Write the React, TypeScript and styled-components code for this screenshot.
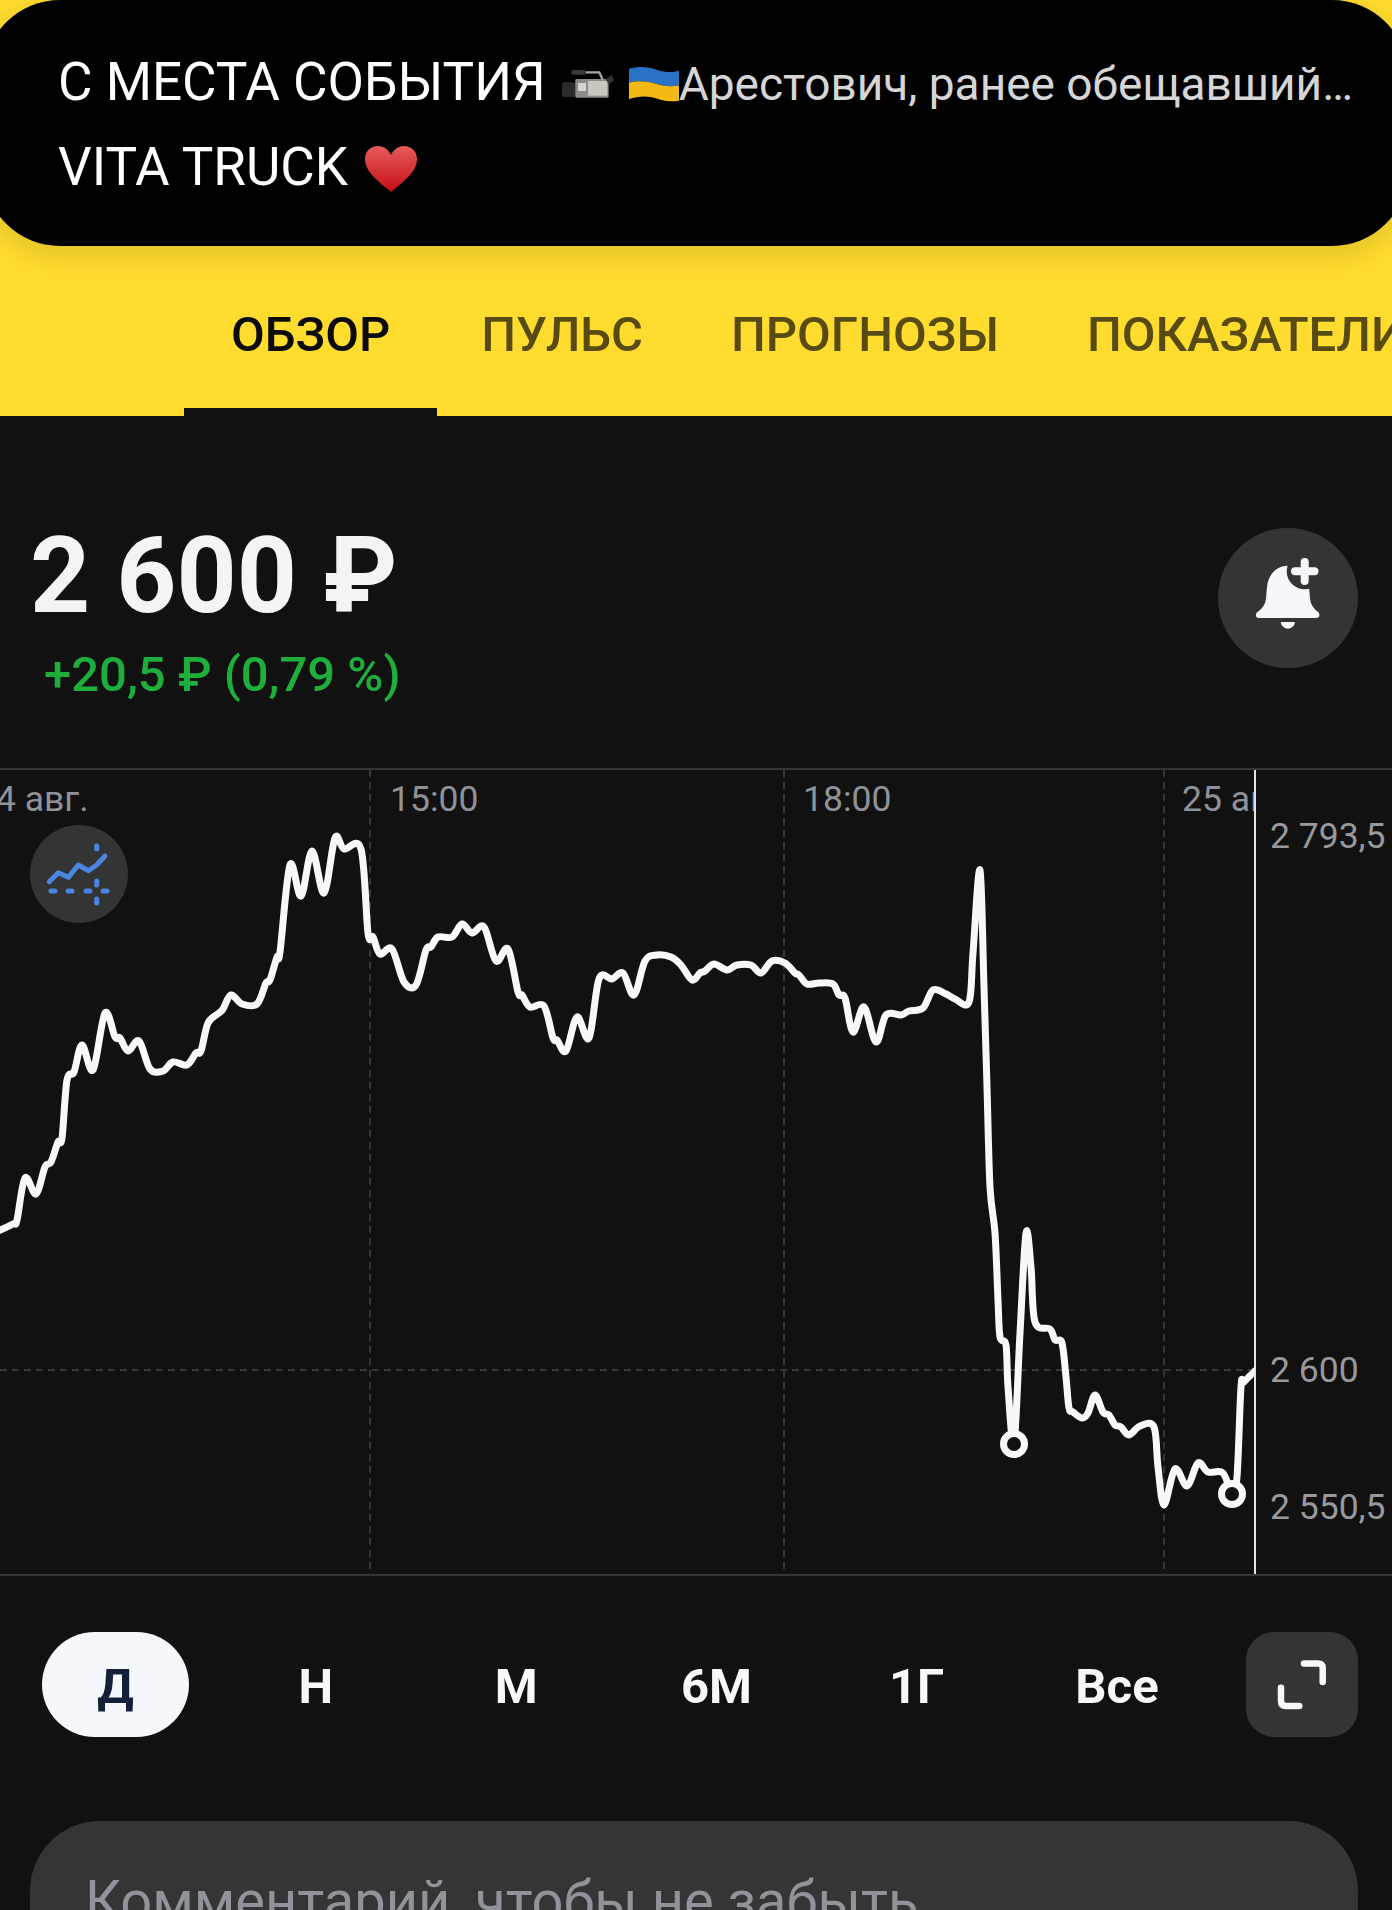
import styled, { createGlobalStyle } from "styled-components";

const GlobalStyle = createGlobalStyle`
  html, body {
    margin: 0;
    background: #111112;
    font-family: Roboto, "Liberation Sans", sans-serif;
  }
`;

const PRICE_LINE: [number, number][] = [
  [-4, 1232], [13, 1224], [17, 1220], [25, 1178], [36, 1194], [45, 1167], [51, 1162], [58, 1142],
  [62, 1138], [67, 1080], [74, 1072], [82, 1045], [93, 1070], [105, 1013], [115, 1037], [120, 1038],
  [128, 1051], [139, 1041], [150, 1069], [163, 1071], [173, 1062], [187, 1065], [196, 1053], [201, 1051],
  [208, 1023], [219, 1013], [223, 1009], [231, 995], [242, 1004], [257, 1004], [266, 983], [270, 980],
  [277, 957], [280, 952], [290, 865], [301, 896], [312, 851], [324, 893], [335, 838], [344, 849],
  [361, 849], [368, 933], [373, 937], [380, 954], [392, 949], [404, 982], [416, 985], [426, 950],
  [431, 947], [438, 937], [452, 937], [462, 924], [472, 933], [484, 927], [496, 961], [508, 949],
  [518, 992], [522, 995], [530, 1007], [544, 1006], [553, 1038], [557, 1040], [566, 1051], [577, 1017],
  [589, 1038], [599, 979], [612, 979], [623, 973], [634, 995], [645, 961], [657, 955], [671, 957],
  [681, 965], [692, 980], [700, 973], [705, 971], [714, 964], [727, 970], [737, 965], [751, 965],
  [761, 973], [772, 961], [785, 963], [795, 973], [799, 975], [807, 984], [819, 983], [833, 984],
  [839, 995], [845, 998], [853, 1032], [864, 1007], [876, 1042], [886, 1015], [901, 1015], [909, 1011],
  [923, 1008], [933, 990], [946, 994], [955, 999], [969, 1002], [973, 953], [980, 870], [984, 987],
  [987, 1087], [990, 1187], [995, 1233], [998, 1300], [1000, 1337], [1006, 1345], [1008, 1387], [1014, 1444],
  [1020, 1333], [1026, 1233], [1031, 1267], [1035, 1322], [1050, 1329], [1055, 1340], [1062, 1343], [1066, 1377],
  [1069, 1408], [1073, 1412], [1082, 1418], [1088, 1413], [1095, 1395], [1103, 1412], [1109, 1415], [1115, 1425],
  [1121, 1427], [1129, 1435], [1140, 1426], [1154, 1427], [1158, 1467], [1164, 1505], [1175, 1469], [1187, 1486],
  [1198, 1463], [1208, 1472], [1223, 1473], [1232, 1494], [1237, 1477], [1241, 1387], [1244, 1382], [1256, 1370],
];

const smoothPath = (pts: [number, number][]) => {
  let d = `M${pts[0][0]} ${pts[0][1]}`;
  for (let i = 0; i < pts.length - 1; i++) {
    const p0 = pts[Math.max(i - 1, 0)];
    const p1 = pts[i];
    const p2 = pts[i + 1];
    const p3 = pts[Math.min(i + 2, pts.length - 1)];
    const c1x = p1[0] + (p2[0] - p0[0]) / 6;
    const c1y = p1[1] + (p2[1] - p0[1]) / 6;
    const c2x = p2[0] - (p3[0] - p1[0]) / 6;
    const c2y = p2[1] - (p3[1] - p1[1]) / 6;
    d += ` C${c1x.toFixed(1)} ${c1y.toFixed(1)} ${c2x.toFixed(1)} ${c2y.toFixed(1)} ${p2[0]} ${p2[1]}`;
  }
  return d;
};

const tabs = ["ОБЗОР", "ПУЛЬС", "ПРОГНОЗЫ", "ПОКАЗАТЕЛИ"];
const periods = ["Д", "Н", "М", "6М", "1Г", "Все"];
const timeLabels = [
  { left: -4, text: "4 авг." },
  { left: 390, text: "15:00" },
  { left: 803, text: "18:00" },
  { left: 1182, text: "25 авг." },
];
const priceLabels = [
  { top: 49, text: "2 793,5" },
  { top: 583, text: "2 600" },
  { top: 720, text: "2 550,5" },
];

const App = () => {
  return (
    <Page>
      <GlobalStyle />
      <Header>
        <NewsCard>
          <NewsLine>
            <NewsTitle>С МЕСТА СОБЫТИЯ</NewsTitle>
            <Emoji $width={52} $height={30} $left={16} $drop={-1} viewBox="0 0 156 90">
              <rect x="0" y="40" width="42" height="44" rx="6" fill="#2b2b2d" />
              <rect x="40" y="30" width="100" height="56" rx="4" fill="#8f8a86" />
              <rect x="78" y="36" width="58" height="44" fill="#c9c5bf" />
              <rect x="48" y="42" width="24" height="24" rx="2" fill="#d8d5d0" />
              <path d="M70 10H112L122 32" fill="none" stroke="#a9a5a0" strokeWidth="7" />
              <rect x="28" y="3" width="44" height="14" rx="5" fill="#3a3a3c" />
              <path d="M130 30L150 18L156 34L140 46Z" fill="#333335" />
            </Emoji>
            <Emoji $width={50} $height={36} $left={15} $drop={2} viewBox="0 0 150 108">
              <path d="M0 8C30 0 60 2 85 12C110 20 130 20 150 14V58C130 62 110 62 85 55C60 47 30 42 0 50Z" fill="#2a72c8" />
              <path d="M0 50C30 42 60 47 85 55C110 62 130 62 150 58V104C130 108 110 106 85 98C60 90 30 88 0 100Z" fill="#f4b913" />
            </Emoji>
            <NewsSubtitle>Арестович, ранее обещавший…</NewsSubtitle>
          </NewsLine>
          <NewsLine>
            <NewsTitle>VITA TRUCK</NewsTitle>
            <Emoji $width={52} $height={46} $left={17} $drop={7} viewBox="0 0 52 46">
              <defs>
                <linearGradient id="heartFill" x1="0" y1="0" x2="0" y2="1">
                  <stop offset="0" stopColor="#e85a5a" />
                  <stop offset="1" stopColor="#c40f18" />
                </linearGradient>
              </defs>
              <path
                d="M26 46C14 36 0 26 0 13C0 5 6 0 13 0C19 0 24 4 26 9C28 4 33 0 39 0C46 0 52 5 52 13C52 26 38 36 26 46Z"
                fill="url(#heartFill)"
              />
            </Emoji>
          </NewsLine>
        </NewsCard>
        <TabBar>
          {tabs.map((tab, i) => (
            <Tab key={tab} $active={i === 0}>
              {tab}
            </Tab>
          ))}
        </TabBar>
      </Header>

      <Quote>
        <div>
          <Price>2 600 ₽</Price>
          <Change>+20,5 ₽ (0,79 %)</Change>
        </div>
        <BellButton>
          <svg width="140" height="140" viewBox="0 0 140 140">
            <path
              d="M70 37.7C58 37.7 50 47 49 59L48 70C47.5 76 45 80 40 83.5C37 85.5 37 90 41 90H98C102 90 102.5 85.5 99.5 83.5C95 80 92.5 76 92 70L91 59C90 47 82 37.7 70 37.7Z"
              fill="#f5f7fa"
            />
            <circle cx="86.7" cy="43.3" r="18" fill="#343434" />
            <path d="M77 43.3H96.5M86.7 34V53" stroke="#f5f7fa" strokeWidth="8" strokeLinecap="round" />
            <path d="M62.7 94H77A7.2 7.7 0 0 1 62.7 94Z" fill="#f5f7fa" />
          </svg>
        </BellButton>
      </Quote>

      <Chart>
        <Plot>
          <svg width="1254" height="804" viewBox="0 770 1254 804">
            <g stroke="#363636" strokeWidth="2" strokeDasharray="7 5">
              <path d="M370 770V1574" />
              <path d="M784 770V1574" />
              <path d="M1164 770V1574" />
              <path d="M0 1370H1254" />
            </g>
            <path
              d={smoothPath(PRICE_LINE)}
              fill="none"
              stroke="#f7f8fa"
              strokeWidth="7"
              strokeLinejoin="round"
            />
            <circle cx="1014" cy="1444" r="10.5" fill="#111112" stroke="#f7f8fa" strokeWidth="7" />
            <circle cx="1232" cy="1494" r="10.5" fill="#111112" stroke="#f7f8fa" strokeWidth="7" />
          </svg>
          {timeLabels.map((label) => (
            <TimeLabel key={label.text} $left={label.left}>
              {label.text}
            </TimeLabel>
          ))}
          <ChartTypeButton>
            <svg width="98" height="98" viewBox="0 0 98 98" fill="none" stroke="#4a86e0" strokeLinecap="round">
              <path d="M19.3 56.7L28.3 47.7L38.3 52.3L48.3 40L58.3 45.7L66.7 40L75 31" strokeWidth="5" strokeLinejoin="round" />
              <path d="M21 66H25M38 66H42M56 66H60M73 66H77" strokeWidth="5" />
              <path d="M66.7 21V24M66.7 56V60M66.7 74V78" strokeWidth="5" />
            </svg>
          </ChartTypeButton>
        </Plot>
        <PriceAxis>
          {priceLabels.map((label) => (
            <PriceLabel key={label.text} $top={label.top}>
              {label.text}
            </PriceLabel>
          ))}
        </PriceAxis>
      </Chart>

      <PeriodRow>
        {periods.map((period, i) => (
          <Period key={period} $active={i === 0}>
            {period}
          </Period>
        ))}
        <ExpandButton>
          <svg width="112" height="105" viewBox="0 0 112 105" fill="none" stroke="#f7f8fa" strokeWidth="6.5" strokeLinecap="round" strokeLinejoin="round">
            <path d="M58 31.5H72Q76.7 31.5 76.7 36V50" />
            <path d="M35 55.7V69Q35 74 40 74H53.3" />
          </svg>
        </ExpandButton>
      </PeriodRow>

      <CommentBox>Комментарий, чтобы не забыть</CommentBox>
    </Page>
  );
};

export default App;

const Page = styled.div`
  width: 1392px;
  height: 1910px;
  overflow: hidden;
  background: #111112;
`;

const Header = styled.header`
  height: 416px;
  background: #ffdc2e;
`;

const NewsCard = styled.div`
  box-sizing: border-box;
  width: 1424px;
  height: 246px;
  margin-left: -16px;
  padding: 40px 0 0 74px;
  background: #000;
  border-radius: 76px;
  box-shadow: 0 8px 30px rgba(0, 0, 0, 0.13);
`;

const NewsLine = styled.div`
  display: flex;
  align-items: baseline;
  height: 85px;
  line-height: 85px;
  white-space: nowrap;
`;

const NewsTitle = styled.span`
  font-size: 53px;
  color: #fff;
`;

const NewsSubtitle = styled.span`
  font-size: 46px;
  color: #d6d6d6;
`;

const Emoji = styled.svg<{ $width: number; $height: number; $left: number; $drop: number }>`
  width: ${(p) => p.$width}px;
  height: ${(p) => p.$height}px;
  margin-left: ${(p) => p.$left}px;
  transform: translateY(${(p) => p.$drop}px);
  flex: none;
`;

const TabBar = styled.nav`
  display: flex;
  height: 170px;
  padding-left: 184px;
  overflow: hidden;
`;

const Tab = styled.div<{ $active: boolean }>`
  box-sizing: border-box;
  display: flex;
  align-items: center;
  flex: none;
  padding: 14px ${(p) => (p.$active ? 47 : 44)}px 0;
  font-size: 49px;
  font-weight: 500;
  color: ${(p) => (p.$active ? "#0b0b0b" : "#584b12")};
  border-bottom: 8px solid ${(p) => (p.$active ? "#111112" : "transparent")};
`;

const Quote = styled.section`
  box-sizing: border-box;
  display: flex;
  justify-content: space-between;
  align-items: flex-start;
  height: 352px;
  padding: 107px 34px 0 30px;
`;

const Price = styled.div`
  font-size: 105px;
  line-height: 107px;
  font-weight: 700;
  color: #f3f5f5;
`;

const Change = styled.div`
  margin: 21px 0 0 14px;
  font-size: 49px;
  line-height: 48px;
  font-weight: 500;
  color: #1fae3c;
`;

const BellButton = styled.div`
  width: 140px;
  height: 140px;
  margin-top: 5px;
  border-radius: 50%;
  background: #343434;
`;

const Chart = styled.section`
  display: flex;
  height: 804px;
  border-top: 2px solid #363636;
  border-bottom: 2px solid #363636;
`;

const Plot = styled.div`
  position: relative;
  flex: none;
  box-sizing: border-box;
  width: 1256px;
  overflow: hidden;
  border-right: 2px solid #e4e5e5;
`;

const TimeLabel = styled.span<{ $left: number }>`
  position: absolute;
  top: 12px;
  left: ${(p) => p.$left}px;
  font-size: 35.5px;
  line-height: 35px;
  color: #8f9298;
  white-space: nowrap;
`;

const ChartTypeButton = styled.div`
  position: absolute;
  top: 55px;
  left: 30px;
  width: 98px;
  height: 98px;
  border-radius: 50%;
  background: #343434;
`;

const PriceAxis = styled.div`
  position: relative;
  flex: 1;
`;

const PriceLabel = styled.span<{ $top: number }>`
  position: absolute;
  top: ${(p) => p.$top}px;
  left: 14px;
  font-size: 35.5px;
  line-height: 35px;
  color: #98999c;
  white-space: nowrap;
`;

const PeriodRow = styled.div`
  display: flex;
  gap: 53.3px;
  margin-top: 56px;
  padding: 0 34px 0 42px;
`;

const Period = styled.div<{ $active: boolean }>`
  box-sizing: border-box;
  display: flex;
  align-items: center;
  justify-content: center;
  width: 147px;
  height: 105px;
  padding-top: 3px;
  border-radius: 53px;
  font-size: 49px;
  font-weight: 700;
  color: ${(p) => (p.$active ? "#14203a" : "#f7f8fa")};
  background: ${(p) => (p.$active ? "#f5f7fa" : "transparent")};
`;

const ExpandButton = styled.div`
  width: 112px;
  height: 105px;
  margin-left: auto;
  border-radius: 28px;
  background: #343434;
`;

const CommentBox = styled.div`
  box-sizing: border-box;
  height: 300px;
  margin: 84px 34px 0 30px;
  padding: 53px 55px 0;
  border-radius: 70px;
  background: #353535;
  font-size: 56px;
  line-height: 54px;
  color: #90939a;
`;
